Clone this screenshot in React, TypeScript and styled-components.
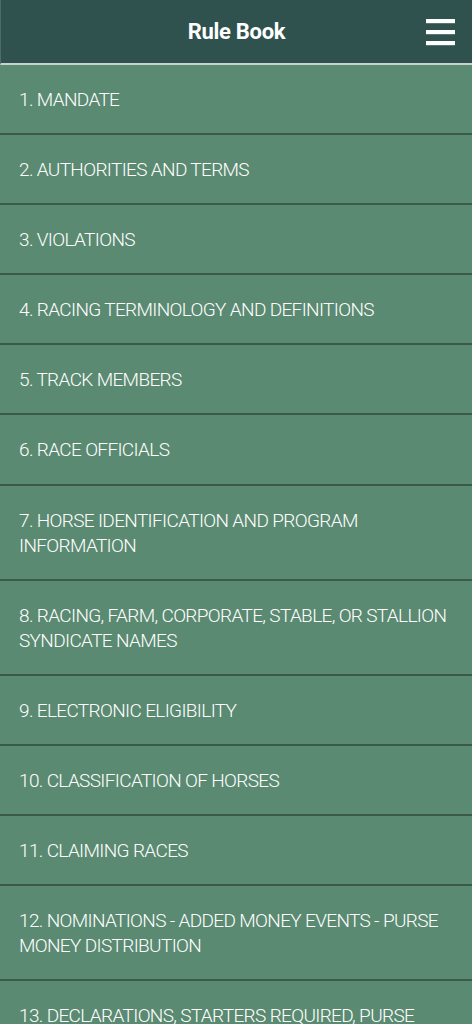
import React from 'react'
import styled, { createGlobalStyle } from 'styled-components'

const GlobalStyle = createGlobalStyle`
  html, body {
    margin: 0;
    padding: 0;
    background: #5b8a72;
  }
  body {
    font-family: Roboto, "Liberation Sans", Arial, sans-serif;
    -webkit-font-smoothing: antialiased;
  }
`

const Page = styled.div`
  width: 472px;
  min-height: 1024px;
  background: #5b8a72;
  overflow: hidden;
`

const Header = styled.header`
  height: 63px;
  background: #2f524f;
  border-bottom: 2px solid #c9d2ce;
  border-left: 1px solid #4d6c68;
  display: grid;
  grid-template-columns: 60px 1fr 60px;
  align-items: center;
`

const Title = styled.h1`
  grid-column: 2;
  margin: 0;
  text-align: center;
  color: #ffffff;
  font-size: 22px;
  font-weight: 700;
  letter-spacing: -0.3px;
`

const MenuButton = styled.button`
  grid-column: 3;
  justify-self: end;
  margin-right: 17px;
  width: 29px;
  height: 26px;
  padding: 0;
  border: none;
  background: transparent;
  display: flex;
  flex-direction: column;
  justify-content: space-between;
  cursor: pointer;
`

const Bar = styled.span`
  display: block;
  height: 4px;
  background: #ffffff;
  box-shadow: 0 1px 0 rgba(120, 140, 135, 0.6);
`

const List = styled.ul`
  list-style: none;
  margin: 0;
  padding: 0;
`

const Row = styled.li`
  padding: 22px 19px 21.1px;
  border-bottom: 2px solid #3b5849;
  color: #ffffff;
  font-size: 19px;
  font-weight: 300;
  line-height: 25px;
  letter-spacing: -0.65px;
  cursor: pointer;
`

const chapters = [
  '1. MANDATE',
  '2. AUTHORITIES AND TERMS',
  '3. VIOLATIONS',
  '4. RACING TERMINOLOGY AND DEFINITIONS',
  '5. TRACK MEMBERS',
  '6. RACE OFFICIALS',
  '7. HORSE IDENTIFICATION AND PROGRAM INFORMATION',
  '8. RACING, FARM, CORPORATE, STABLE, OR STALLION SYNDICATE NAMES',
  '9. ELECTRONIC ELIGIBILITY',
  '10. CLASSIFICATION OF HORSES',
  '11. CLAIMING RACES',
  '12. NOMINATIONS - ADDED MONEY EVENTS - PURSE MONEY DISTRIBUTION',
  '13. DECLARATIONS, STARTERS REQUIRED, PURSE MONEY',
  '14. ENTRIES',
]

const App = () => (
  <Page>
    <GlobalStyle />
    <Header>
      <Title>Rule Book</Title>
      <MenuButton aria-label="Menu">
        <Bar />
        <Bar />
        <Bar />
      </MenuButton>
    </Header>
    <List>
      {chapters.map((c) => (
        <Row key={c}>{c}</Row>
      ))}
    </List>
  </Page>
)

export default App
